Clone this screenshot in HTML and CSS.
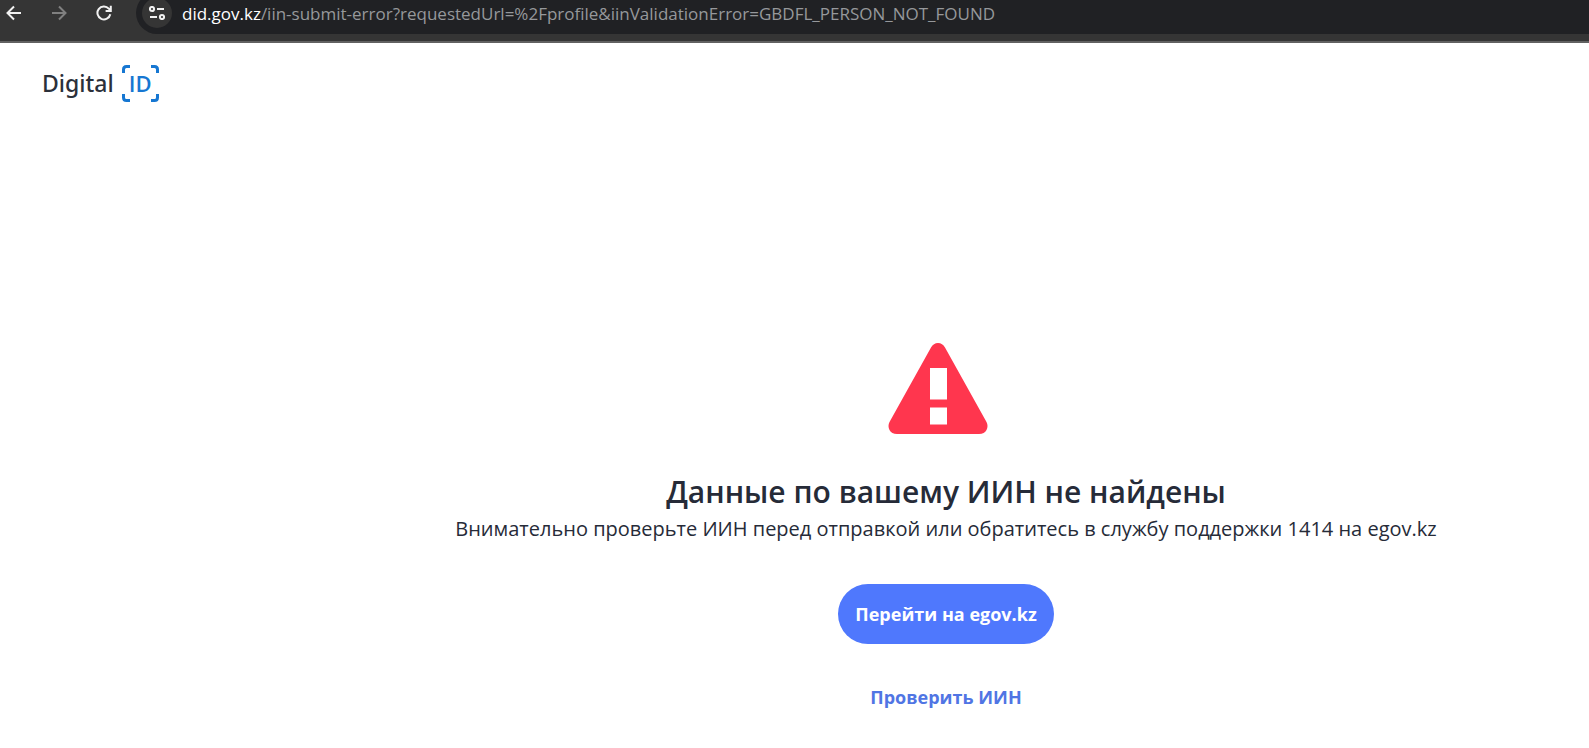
FILE: index.html
```html
<!DOCTYPE html>
<html lang="ru">
<head>
    <meta charset="UTF-8">
    <meta name="viewport" content="width=device-width, initial-scale=1.0">
    <title>Digital ID</title>
    <link rel="stylesheet" href="styles.css">
</head>
<body>
    <div class="toolbar">
        <div class="nav-buttons">
            <button type="button" class="nav-btn" aria-label="Назад">
                <svg width="16" height="16" viewBox="0 0 16 16"><path d="M15 8H2M8 1.5L1.5 8L8 14.5"/></svg>
            </button>
            <button type="button" class="nav-btn nav-btn-off" aria-label="Вперёд" disabled>
                <svg width="16" height="16" viewBox="0 0 16 16"><path d="M1 8H14M8 1.5L14.5 8L8 14.5"/></svg>
            </button>
            <button type="button" class="nav-btn" aria-label="Обновить">
                <svg width="16" height="16" viewBox="0 0 16 16"><path d="M14.3 9.3A6.5 6.5 0 1 1 12.8 3.6L14.6 5.6M14.8 0.8V6H9.6"/></svg>
            </button>
        </div>
        <div class="address">
            <button type="button" class="site-info" aria-label="Сведения о сайте">
                <svg width="16" height="14" viewBox="0 0 16 14">
                    <circle cx="3" cy="3" r="2.1"/>
                    <circle cx="13" cy="11" r="2.1"/>
                    <path d="M8 3H15M1 11H8"/>
                </svg>
            </button>
            <div class="url"><span class="url-host">did.gov.kz</span>/iin-submit-error?requestedUrl=%2Fprofile&amp;iinValidationError=GBDFL_PERSON_NOT_FOUND</div>
        </div>
    </div>

    <header class="header">
        <a href="#" class="logo">
            <span>Digital</span>
            <span class="logo-id">
                <svg class="logo-frame" width="37" height="37" viewBox="0 0 37 37">
                    <path d="M1.5 8V4.5Q1.5 1.5 4.5 1.5H8M29 1.5H32.5Q35.5 1.5 35.5 4.5V8M35.5 29V32.5Q35.5 35.5 32.5 35.5H29M8 35.5H4.5Q1.5 35.5 1.5 32.5V29"/>
                </svg>
                ID
            </span>
        </a>
    </header>

    <main class="content">
        <svg class="warning" width="100" height="91" viewBox="0 0 100 91">
            <path class="warning-shape" d="M43 4.5Q45.500 0 50 0Q54.500 0 57 4.500L98.500 79Q100.500 83 98.500 87Q96.500 91 91 91H9Q3.500 91 1.500 87Q-0.500 83 1.500 79Z"/>
            <path class="warning-mark" d="M42 25H59V56.500H42ZM42 64.500H59V81.500H42Z"/>
        </svg>
        <h1 class="title">Данные по вашему ИИН не найдены</h1>
        <p class="subtitle">Внимательно проверьте ИИН перед отправкой или обратитесь в службу поддержки 1414 на egov.kz</p>
        <button type="button" class="btn">Перейти на egov.kz</button>
        <a href="#" class="link">Проверить ИИН</a>
    </main>
</body>
</html>
```
FILE: styles.css
```css
* {
    margin: 0;
    padding: 0;
    box-sizing: border-box;
}

body {
    font-family: 'Open Sans', 'Noto Sans', sans-serif;
    background: #fff;
    color: #262b38;
    overflow-x: hidden;
}

button {
    border: none;
    font-family: inherit;
    cursor: pointer;
}

/* Browser toolbar */
.toolbar {
    display: flex;
    height: 43px;
    background: #353535;
    border-bottom: 2px solid #616161;
    overflow: hidden;
}

.nav-buttons {
    display: flex;
    gap: 29px;
    width: 136px;
    height: 26px;
    padding-left: 6px;
    flex-shrink: 0;
}

.nav-btn {
    display: flex;
    align-items: center;
    background: none;
}

.nav-btn svg,
.site-info svg {
    fill: none;
    stroke: #f1f1f1;
    stroke-width: 2;
}

.nav-btn-off svg {
    stroke: #808080;
}

.address {
    display: flex;
    align-items: center;
    flex: 1;
    gap: 10px;
    height: 42px;
    margin-top: -8px;
    padding-left: 6px;
    background: #202124;
    border-radius: 21px 0 0 21px;
}

.site-info {
    display: flex;
    align-items: center;
    justify-content: center;
    width: 30px;
    height: 30px;
    border-radius: 50%;
    background: #353535;
}

.url {
    padding-top: 2px;
    font-size: 17px;
    line-height: 24px;
    color: #96989b;
    white-space: nowrap;
}

.url-host {
    color: #fff;
}

/* Header */
.header {
    padding: 22px 42px;
}

.logo {
    display: inline-flex;
    align-items: center;
    gap: 8px;
    font-family: 'Noto Sans', sans-serif;
    font-size: 23px;
    font-weight: 500;
    line-height: 37px;
    color: #2b303a;
    text-decoration: none;
}

.logo-id {
    position: relative;
    width: 37px;
    height: 37px;
    font-family: 'Open Sans', sans-serif;
    font-size: 22px;
    font-weight: 600;
    text-align: center;
    color: #1677d2;
}

.logo-frame {
    position: absolute;
    top: 0;
    left: 0;
    fill: none;
    stroke: #1677d2;
    stroke-width: 3;
}

/* Error message */
.content {
    display: flex;
    flex-direction: column;
    align-items: center;
    padding: 219px 0 40px 303px;
}

.warning {
    margin-right: 16px;
}

.warning-shape {
    fill: #ff364e;
}

.warning-mark {
    fill: #fff;
}

.title {
    margin-top: 38px;
    font-size: 30px;
    font-weight: 600;
    line-height: 40px;
}

.subtitle {
    margin-top: 3px;
    font-size: 20px;
    line-height: 28px;
    white-space: nowrap;
}

.btn {
    height: 60px;
    margin-top: 41px;
    padding: 0 17px;
    border-radius: 30px;
    background: #4f78fd;
    color: #fff;
    font-size: 18px;
    font-weight: 700;
}

.link {
    margin-top: 40px;
    font-size: 18px;
    font-weight: 700;
    line-height: 26px;
    color: #5075e4;
    text-decoration: none;
}
```
